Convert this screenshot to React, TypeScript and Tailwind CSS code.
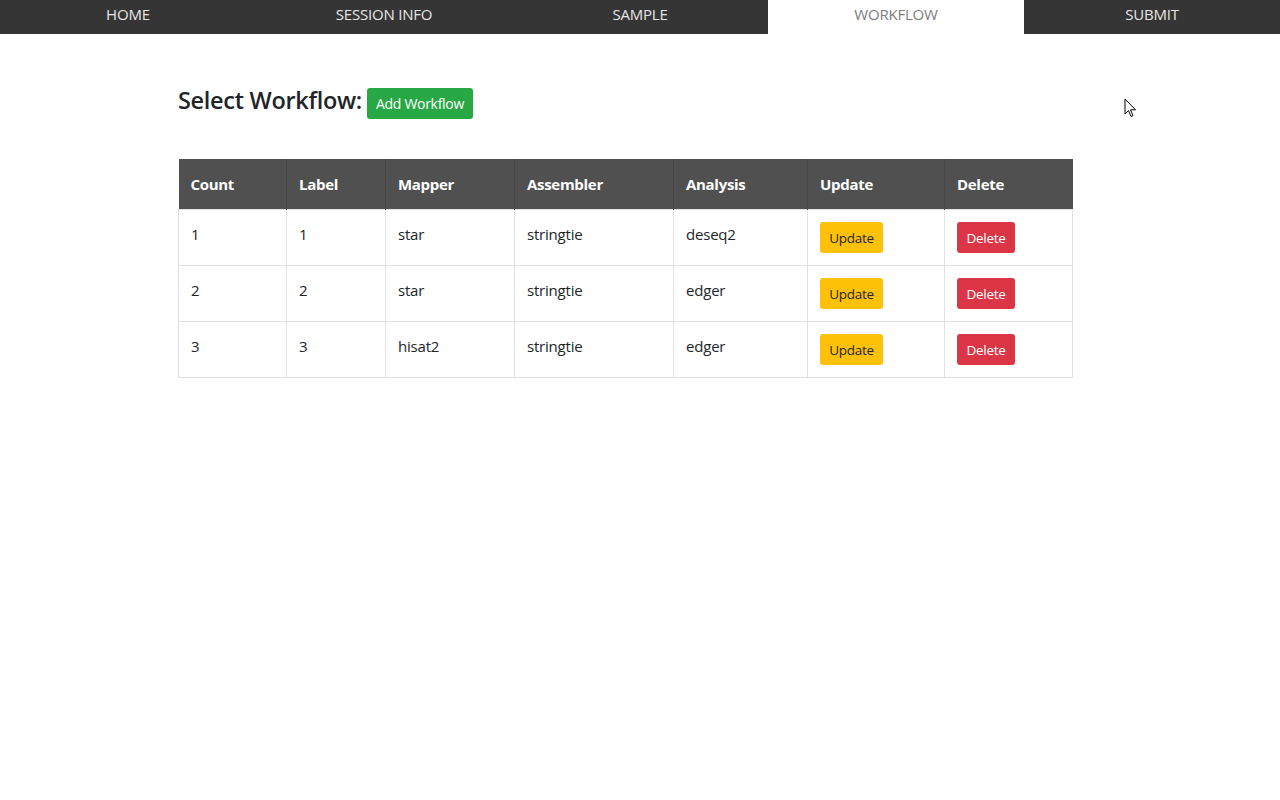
import React from 'react';

const tabs = ['HOME', 'SESSION INFO', 'SAMPLE', 'WORKFLOW', 'SUBMIT'];

const rows = [
  { count: 1, label: '1', mapper: 'star', assembler: 'stringtie', analysis: 'deseq2' },
  { count: 2, label: '2', mapper: 'star', assembler: 'stringtie', analysis: 'edger' },
  { count: 3, label: '3', mapper: 'hisat2', assembler: 'stringtie', analysis: 'edger' },
];

const headers = [
  { name: 'Count', w: 'w-[108px]' },
  { name: 'Label', w: 'w-[99px]' },
  { name: 'Mapper', w: 'w-[129px]' },
  { name: 'Assembler', w: 'w-[159px]' },
  { name: 'Analysis', w: 'w-[134px]' },
  { name: 'Update', w: 'w-[137px]' },
  { name: 'Delete', w: 'w-[128px]' },
];

const App: React.FC = () => {
  const active = 'WORKFLOW';

  return (
    <div className="relative min-h-[800px] bg-white text-[#212529]" style={{ fontFamily: '"Open Sans", "Noto Sans", sans-serif' }}>
      {/* Top tabs */}
      <nav className="grid grid-cols-5 h-[34px] bg-[#353535]">
        {tabs.map((t) => (
          <div
            key={t}
            className={`flex justify-center pt-[4px] text-[15px] leading-[20px] tracking-[-0.2px] ${
              t === active ? 'bg-white text-[#7d7d7d]' : 'text-[#e6e6e6]'
            }`}
          >
            {t}
          </div>
        ))}
      </nav>

      <div className="ml-[178px] w-[894px] pt-[54px]">
        <div className="flex items-center gap-[5px] h-[31px]">
          <h4 className="text-[23.5px] font-semibold leading-none tracking-[-0.3px] text-[#212529] -mt-[5px]">Select Workflow:</h4>
          <button className="h-[31px] w-[106px] rounded-[3px] bg-[#28a745] text-white text-[14px] tracking-[-0.3px]">
            Add Workflow
          </button>
        </div>

        <table className="mt-[40px] w-[894px] table-fixed border-collapse">
          <thead>
            <tr className="h-[50px] bg-[#505050] text-white">
              {headers.map((h) => (
                <th key={h.name} className={`${h.w} px-[12px] text-left text-[15px] font-bold tracking-[-0.3px] border-r border-[#484848] last:border-r-0`}>
                  {h.name}
                </th>
              ))}
            </tr>
          </thead>
          <tbody>
            {rows.map((r) => (
              <tr key={r.count} className="h-[56px] text-[15px] tracking-[-0.2px]">
                <td className="px-[12px] border border-[#dee2e6] align-top pt-[13px]">{r.count}</td>
                <td className="px-[12px] border border-[#dee2e6] align-top pt-[13px]">{r.label}</td>
                <td className="px-[12px] border border-[#dee2e6] align-top pt-[13px]">{r.mapper}</td>
                <td className="px-[12px] border border-[#dee2e6] align-top pt-[13px]">{r.assembler}</td>
                <td className="px-[12px] border border-[#dee2e6] align-top pt-[13px]">{r.analysis}</td>
                <td className="px-[12px] border border-[#dee2e6] align-top pt-[12px]">
                  <button className="h-[31px] w-[63px] rounded-[3px] bg-[#ffc107] pt-[2px] text-[13.5px] text-[#212529] tracking-[-0.3px]">
                    Update
                  </button>
                </td>
                <td className="px-[12px] border border-[#dee2e6] align-top pt-[12px]">
                  <button className="h-[31px] w-[58px] rounded-[3px] bg-[#dc3545] pt-[2px] text-[13.5px] text-white tracking-[-0.3px]">
                    Delete
                  </button>
                </td>
              </tr>
            ))}
          </tbody>
        </table>
      </div>

      {/* mouse pointer captured in the screenshot */}
      <svg className="absolute left-[1124px] top-[98px]" width="14" height="21" viewBox="0 0 14 21">
        <path d="M1 1 L1 16 L4.5 12.5 L7 18.5 L9 17.5 L6.5 11.8 L11.5 11.8 Z" fill="white" stroke="black" strokeWidth="1" strokeLinejoin="miter" />
      </svg>
    </div>
  );
};

export default App;
